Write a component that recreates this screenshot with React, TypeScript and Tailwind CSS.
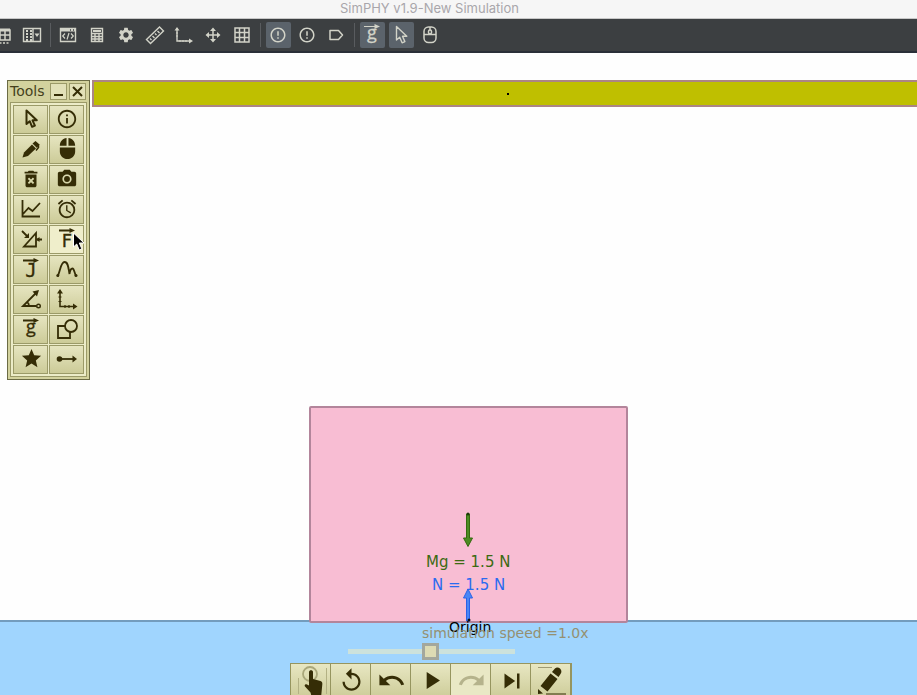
import React, { useState } from "react";
import {
  MdAlarm,
  MdDeleteForever,
  MdErrorOutline,
  MdMouse,
  MdOutlineInfo,
  MdPhotoCamera,
  MdPlayArrow,
  MdRedo,
  MdReplay,
  MdSettings,
  MdSkipNext,
  MdStar,
  MdUndo,
} from "react-icons/md";

type Item = { label: string; icon: React.ReactNode; active?: boolean };

function Svg({ children, sw = 2 }: { children: React.ReactNode; sw?: number }) {
  return (
    <svg width="22" height="22" viewBox="0 0 22 22" fill="none" stroke="currentColor" strokeWidth={sw} className="shrink-0 overflow-visible" aria-hidden="true">
      {children}
    </svg>
  );
}

function Pointer({ sw = 2 }: { sw?: number }) {
  return (
    <Svg sw={sw}>
      <path d="M6.5 2.5v13.5l3.2-2.8 2.4 5.6 2.8-1.2-2.4-5.3h4.3z" strokeLinejoin="round" />
    </Svg>
  );
}

const letterFonts: Record<string, { family: string; size: number; y: number }> = {
  g: { family: "'Open Sans', sans-serif", size: 18, y: 15 },
  F: { family: "'DejaVu Sans', sans-serif", size: 18, y: 19 },
  J: { family: "'DejaVu Sans Mono', monospace", size: 19, y: 19 },
};

function VectorLetter({ letter, thin }: { letter: string; thin?: boolean }) {
  const f = letterFonts[letter];
  return (
    <Svg sw={thin ? 1 : 2}>
      <path d="M3 2.5h12" />
      <path d="M13.5 0L19 2.5l-5.5 2.5z" fill="currentColor" stroke="none" />
      <text
        x="11"
        y={f.y}
        textAnchor="middle"
        fill="currentColor"
        stroke="currentColor"
        strokeWidth="0.3"
        fontFamily={f.family}
        fontSize={f.size}
      >
        {letter}
      </text>
    </Svg>
  );
}

const topGroups: Item[][] = [
  [
    {
      label: "Table",
      icon: (
        <Svg sw={1.5}>
          <path d="M3 6h15v10H3zM3 11h15M8 6v10M13 6v10" />
          <path d="M3 6h15" strokeWidth="3" />
          <path d="M4 19h14" strokeDasharray="2 1.5" />
        </Svg>
      ),
    },
    {
      label: "Panels",
      icon: (
        <Svg sw={1.4}>
          <path d="M2.5 4.5h17v13h-17zM12 4v14" />
          <path d="M5 7h2M9 7h2M5 10h2M9 10h2M5 13h2M9 13h2M5 16h2M9 16h2" strokeWidth="2" />
          <path d="M13.5 9.5h5L16 13z" fill="currentColor" stroke="none" />
        </Svg>
      ),
    },
  ],
  [
    {
      label: "Script",
      icon: (
        <Svg sw={1.4}>
          <path d="M3.5 4.5h15v13h-15z" />
          <path d="M3 6h16" strokeWidth="3" />
          <path d="M13 6h1M16 6h1" stroke="#3c3f41" />
          <path d="M8 9.5L5.7 12 8 14.5M14 9.5l2.3 2.5-2.3 2.5M12 9l-2 6.5" strokeWidth="1.2" />
        </Svg>
      ),
    },
    {
      label: "Calculator",
      icon: (
        <Svg sw={1.4}>
          <path d="M5.5 4.5h11v13h-11zM5 9.5h12M5 12.5h12M5 15h12M9 9v9M13 9v9" />
          <path d="M7 7h8" strokeWidth="2" />
        </Svg>
      ),
    },
    { label: "Settings", icon: <MdSettings size={18} /> },
    {
      label: "Ruler",
      icon: (
        <Svg sw={1.4}>
          <path d="M2.5 15.5L15.5 3l4 4L6.5 19.5z" />
          <path d="M6 14.500l1.500 1.500M8.500 12l2 2M11 9.500l1.500 1.500M13.500 7l2 2" />
        </Svg>
      ),
    },
    {
      label: "Axes",
      icon: (
        <Svg sw={1.4}>
          <path d="M4 4v13h13" />
          <path d="M1.5 6.5L4 3l2.5 3.5zM16 14.5l4 2.5-4 2.5z" fill="currentColor" stroke="none" />
          <path d="M3 9h2M3 12h2M7 16v2M10 16v2M13 16v2" strokeWidth="1" />
        </Svg>
      ),
    },
    {
      label: "Move",
      icon: (
        <Svg sw={1.5}>
          <path d="M11 5v12M5 11h12" />
          <path d="M8 7l3-3.500 3 3.500zM8 15l3 3.500 3-3.500zM7 8l-3.500 3L7 14zM15 8l3.500 3-3.500 3z" fill="currentColor" stroke="none" />
        </Svg>
      ),
    },
    {
      label: "Grid",
      icon: (
        <Svg sw={1.5}>
          <path d="M4 4h14v14H4zM8.500 4v14M13.500 4v14M4 8.500h14M4 13.500h14" />
        </Svg>
      ),
    },
  ],
  [
    { label: "Warnings", icon: <MdErrorOutline size={18} />, active: true },
    { label: "Alerts", icon: <MdErrorOutline size={18} /> },
    {
      label: "Labels",
      icon: (
        <Svg sw={1.5}>
          <path d="M5 6.5h8.500l4 4.500-4 4.500H5z" strokeLinejoin="round" />
        </Svg>
      ),
    },
  ],
  [
    { label: "Gravity", icon: <VectorLetter letter="g" thin />, active: true },
    { label: "Select", icon: <Pointer sw={1.4} />, active: true },
    {
      label: "Mouse",
      icon: (
        <Svg sw={1.5}>
          <rect x="5" y="3" width="12" height="15.5" rx="4.5" />
          <path d="M5 10.5h12M11 3v3M11 10v1" />
          <rect x="9.5" y="6" width="3" height="4" rx="1.5" />
        </Svg>
      ),
    },
  ],
];

const tools: Item[] = [
  { label: "Pointer", icon: <Pointer /> },
  { label: "Info", icon: <MdOutlineInfo size={22} /> },
  {
    label: "Draw",
    icon: (
      <Svg>
        <path d="M2.5 19.5l1.500-5 8-8 4 4-8 7.500z" fill="currentColor" stroke="none" />
        <path d="M12.5 5.5l3-2.500 4 3.500-2.500 3.500z" fill="currentColor" stroke="none" />
        <path d="M18.5 6v3.500l-2.500 3" strokeWidth="1.5" />
      </Svg>
    ),
  },
  { label: "Mouse", icon: <MdMouse size={23} /> },
  { label: "Delete", icon: <MdDeleteForever size={22} /> },
  { label: "Camera", icon: <MdPhotoCamera size={22} /> },
  {
    label: "Graph",
    icon: (
      <Svg sw={1.8}>
        <path d="M2.5 2v16.500H20M3 16l5.500-6 4 3L20 5" />
      </Svg>
    ),
  },
  { label: "Timer", icon: <MdAlarm size={22} /> },
  {
    label: "Angle force",
    icon: (
      <Svg sw={1.8}>
        <path d="M4 18.5L16 5v13.500zM2 3l6 6M17 11.500h5" />
        <path d="M9 5v5H4zM16 11.500l3.500-2.500v5z" fill="currentColor" stroke="none" />
      </Svg>
    ),
  },
  { label: "Force", icon: <VectorLetter letter="F" />, active: true },
  { label: "Impulse", icon: <VectorLetter letter="J" /> },
  {
    label: "Curve",
    icon: (
      <Svg sw={1.8}>
        <path d="M1.500 18C4 15 4.500 4 8.500 4s4 7 5 12c.5-4 1.500-5.500 3-5.500s2 4.500 3.500 7.500" />
        <circle cx="1.800" cy="17.500" r="1.500" fill="currentColor" stroke="none" />
        <circle cx="20" cy="17.500" r="1.500" fill="currentColor" stroke="none" />
      </Svg>
    ),
  },
  {
    label: "Angle",
    icon: (
      <Svg sw={1.8}>
        <path d="M16.5 18H3L16 5M7 14c1.500 1 2 2 2 4" />
        <path d="M12.5 3.5L19 2l-2 6.500z" fill="currentColor" stroke="none" />
        <circle cx="18.500" cy="18" r="1.800" strokeWidth="1.400" />
      </Svg>
    ),
  },
  {
    label: "Axes",
    icon: (
      <Svg sw={1.6}>
        <path d="M4 3v15.500h14" />
        <path d="M1 5.5L4 1l3 4.500zM17 15.500l4.500 3-4.500 3z" fill="currentColor" stroke="none" />
        <path d="M2.5 9h3M2.500 13.500h3M9 17v3M13 17v3" strokeWidth="1.2" />
      </Svg>
    ),
  },
  { label: "Gravity", icon: <VectorLetter letter="g" /> },
  {
    label: "Shapes",
    icon: (
      <Svg sw={1.8}>
        <path d="M9 8H2v12h12v-6" />
        <circle cx="15" cy="8" r="6" />
      </Svg>
    ),
  },
  { label: "Star", icon: <MdStar size={23} /> },
  {
    label: "Link",
    icon: (
      <Svg sw={1.8}>
        <path d="M4 11h14" />
        <circle cx="3.500" cy="11" r="2.800" fill="currentColor" stroke="none" />
        <path d="M16.500 7.500L21 11l-4.500 3.500z" fill="currentColor" stroke="none" />
      </Svg>
    ),
  },
];

const playback: (Item & { disabled?: boolean })[] = [
  {
    label: "Touch",
    icon: (
      <svg width="34" height="30" viewBox="0 0 34 30" fill="currentColor" className="shrink-0" aria-hidden="true">
        <circle cx="15" cy="8" r="7" fill="none" stroke="#a9a77a" strokeWidth="1.8" />
        <path d="M3.500 12v16M31.500 2v26" stroke="#b3b184" strokeWidth="1" />
        <path d="M14 6c0-2.500 4-2.500 4 0v7l7.500 2c1.500.5 2 1.500 1.800 3.500L26 32H17l-1.500-5.500L10 20.500c-1-1.500.5-3 2-2l2 1z" />
      </svg>
    ),
  },
  { label: "Reset", icon: <MdReplay size={27} /> },
  { label: "Undo", icon: <MdUndo size={29} /> },
  { label: "Play", icon: <MdPlayArrow size={29} /> },
  { label: "Redo", icon: <MdRedo size={29} />, disabled: true },
  { label: "Step", icon: <MdSkipNext size={30} /> },
  {
    label: "Edit",
    icon: (
      <svg width="30" height="30" viewBox="0 0 30 30" fill="currentColor" className="shrink-0" aria-hidden="true">
        <path d="M3.500 20L13.500 7.500l7 5.500L10.500 25.500zM15 6l2.500-3c1.500-2 4-2 5.500-.5s2 3.500.5 5.500l-2 3zM1 28v-5l5 4.500z" />
        <path d="M1 1.500h14" stroke="currentColor" strokeWidth="1" opacity="0.4" />
        <path d="M9 28h20" stroke="currentColor" strokeWidth="2" opacity="0.5" />
      </svg>
    ),
  },
];

function TopToolbar() {
  return (
    <nav aria-label="Main toolbar" className="flex h-[34px] shrink-0 items-center gap-1 overflow-hidden border-b-2 border-[#2a2f38] bg-[#3c3f41] text-[#d2d3c8]">
      {topGroups.map((group, gi) => (
        <React.Fragment key={gi}>
          {gi > 0 && <span className="mx-px h-6 w-px shrink-0 bg-[#595c5f]" />}
          {group.map((item, i) => (
            <button
              key={item.label}
              aria-label={item.label}
              className={`flex h-[26px] w-[25px] shrink-0 items-center justify-center rounded-xs pr-0.5 ${item.active ? "bg-[#5b636b]" : ""} ${gi === 0 && i === 0 ? "-ml-[9px]" : ""}`}
            >
              {item.icon}
            </button>
          ))}
        </React.Fragment>
      ))}
    </nav>
  );
}

function ToolsWindow() {
  return (
    <section aria-label="Tools" className="absolute top-[27px] left-[7px] border border-[#6b6b45] bg-[#d3d29e] p-0.5 text-[#352d06]">
      <header className="flex h-[19px] items-start gap-0.5 pr-px">
        <h2 className="flex-1 text-sm leading-4 text-[#45401c]">Tools</h2>
        <button aria-label="Minimise" className="flex size-[17px] items-end justify-center border border-[#9b9a68] bg-[#e2e1b8] pb-[3px]">
          <span className="h-0.5 w-[9px] bg-[#352d06]" />
        </button>
        <button aria-label="Close" className="flex size-[17px] items-center justify-center border border-[#9b9a68] bg-[#e2e1b8]">
          <svg width="11" height="11" viewBox="0 0 11 11" stroke="currentColor" strokeWidth="2" aria-hidden="true">
            <path d="M1 1l9 9M10 1l-9 9" />
          </svg>
        </button>
      </header>
      <div className="grid grid-cols-[35px_35px] gap-px border border-[#9b9a68] bg-[#ececc8] p-0.5">
        {tools.map((t) => (
          <button
            key={t.label}
            aria-label={t.label}
            className={`flex h-[29px] items-center justify-center border border-[#9b9a68] pb-0.5 pl-px ${t.active ? "bg-[#efeecb]" : "bg-linear-to-b from-[#e6e5c0] to-[#cccb98]"}`}
          >
            {t.icon}
          </button>
        ))}
      </div>
    </section>
  );
}

function Playback() {
  const [speed, setSpeed] = useState(49);
  return (
    <section aria-label="Playback" className="absolute bottom-0 left-[290px] flex flex-col items-start">
      <label htmlFor="speed" className="ml-[132px] text-sm leading-5 whitespace-nowrap text-[#959071]">
        simulation speed =1.0x
      </label>
      <input
        id="speed"
        type="range"
        value={speed}
        onChange={(e) => setSpeed(Number(e.target.value))}
        className="mb-[3px] ml-[58px] h-[17px] w-[167px] appearance-none bg-transparent [&::-webkit-slider-runnable-track]:h-[17px] [&::-webkit-slider-runnable-track]:bg-[linear-gradient(transparent_6px,#cce2dc_6px,#cce2dc_11px,transparent_11px)] [&::-webkit-slider-thumb]:size-[17px] [&::-webkit-slider-thumb]:appearance-none [&::-webkit-slider-thumb]:border-3 [&::-webkit-slider-thumb]:border-[#a3a79d] [&::-webkit-slider-thumb]:bg-[#dddbb4]"
      />
      <div className="flex h-8 border-t border-r-2 border-[#96955f] text-[#352d06]">
        {playback.map((p) => (
          <button
            key={p.label}
            aria-label={p.label}
            disabled={p.disabled}
            className={`flex w-10 items-center justify-center overflow-hidden border-l border-[#96955f] pt-0.5 pl-0.5 ${p.disabled ? "bg-[#e9e8c5] text-[#b5b38c]" : "bg-linear-to-b from-[#e8e7c2] to-[#cfce9c]"}`}
          >
            {p.icon}
          </button>
        ))}
      </div>
    </section>
  );
}

export default function App() {
  return (
    <div className="flex h-screen flex-col overflow-hidden bg-white font-['DejaVu_Sans',sans-serif]">
      <h1 className="h-[19px] shrink-0 border-b border-[#c8c8c8] bg-[#f6f6f6] pr-[58px] text-center font-['Inter',sans-serif] text-[13px] leading-[17px] text-[#a9a6ab]">
        SimPHY v1.9-New Simulation
      </h1>
      <TopToolbar />
      <main className="relative flex-1 overflow-hidden bg-[#fefefe] text-[15px] leading-5">
        <div className="absolute top-[27px] right-0 left-[92px] h-[27px] border-2 border-r-0 border-[#ac8585] bg-[#bfbf00]" />
        <span className="absolute top-10 left-[507px] size-0.5 bg-black" />
        <div className="absolute inset-x-0 bottom-0 h-[75px] border-t-2 border-[#739cbd] bg-[#a0d5fe]" />
        <div className="absolute bottom-[72px] left-[309px] h-[217px] w-[319px] rounded-xs border-2 border-[#b3859b] bg-[#f8bdd3]" />
        <svg className="absolute bottom-[147px] left-[462px]" width="12" height="36" viewBox="0 0 12 36" aria-hidden="true">
          <path d="M4.5 2h3v24h3L6 34.500 1.500 26h3z" fill="#4c8c22" stroke="#35690f" />
          <circle cx="6" cy="2" r="1.5" fill="#1e3a0a" />
        </svg>
        <span className="absolute bottom-[123px] left-[426px] whitespace-nowrap text-[#3c6a12]">Mg = 1.5 N</span>
        <span className="absolute bottom-[100px] left-[432px] whitespace-nowrap text-[#2a6bf0]">N = 1.5 N</span>
        <svg className="absolute bottom-[72px] left-[462px]" width="12" height="36" viewBox="0 0 12 36" aria-hidden="true">
          <path d="M4.5 34V11h-3L6 2l4.500 9h-3v23z" fill="#4a86f5" stroke="#2a62e6" />
          <circle cx="7" cy="33" r="1.5" fill="#111" />
        </svg>
        <span className="absolute bottom-[58px] left-[449px] text-sm leading-5 text-black">Origin</span>
        <Playback />
        <ToolsWindow />
        <svg className="absolute top-[179px] left-[72px]" width="14" height="20" viewBox="0 0 14 20" aria-hidden="true">
          <path d="M1.5 1v14l3.200-3 2.500 6 2.600-1.200L7.300 11H12z" fill="#000" stroke="#fff" strokeWidth="1" />
        </svg>
      </main>
    </div>
  );
}
